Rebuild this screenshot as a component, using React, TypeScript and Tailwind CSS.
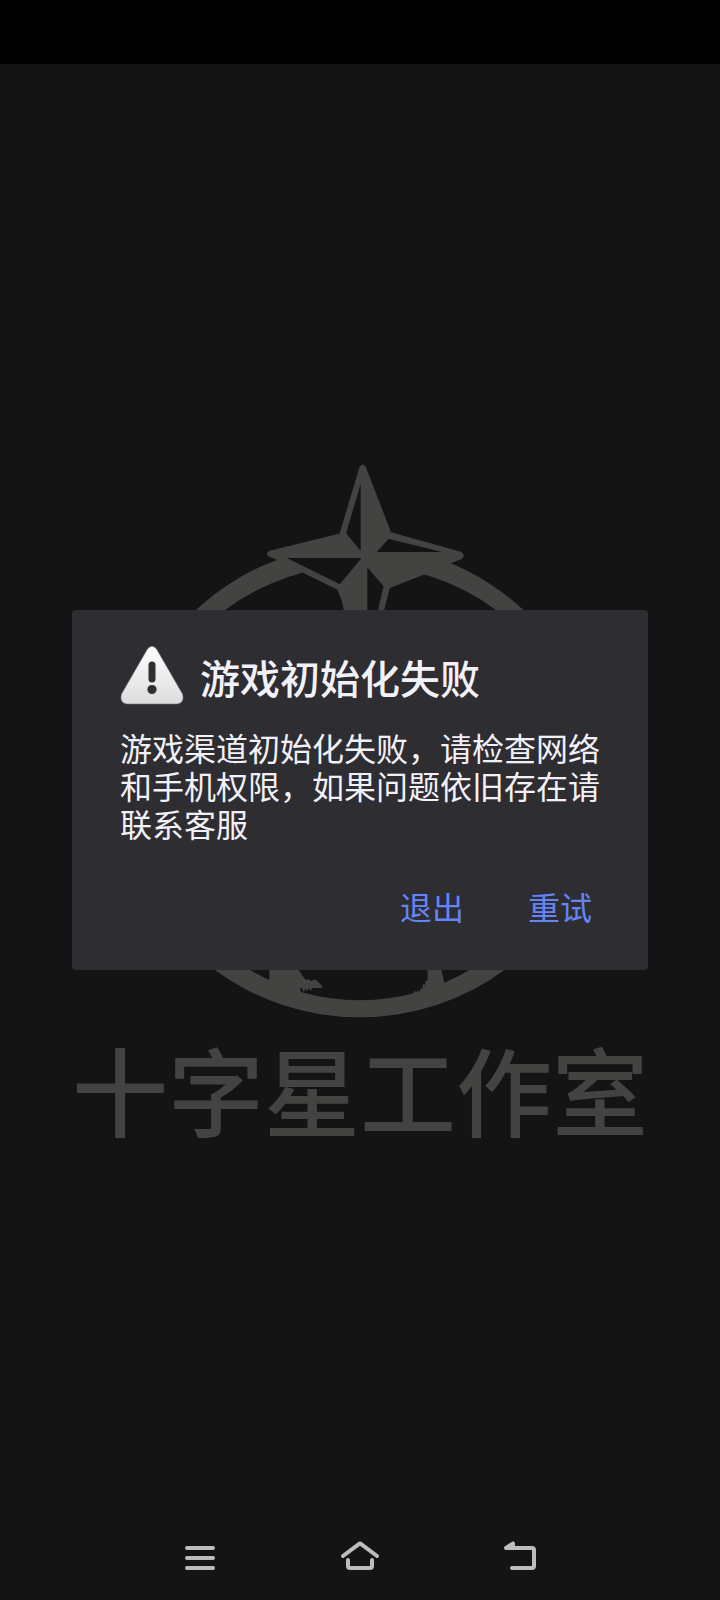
function StudioEmblem() {
  return (
    <svg viewBox="-324 30 1728 1728" className="w-full" fill="#434341" aria-hidden="true">
      {/* ring */}
      <path d="M36 492L48 480A717 717 0 0 1 1030 480L1042 492H960L948 480A681 681 0 0 0 135 480L120 492Z" />
      <path d="M88 1547L100 1557A738 738 0 0 0 978 1557L990 1547H888L873 1557A642 642 0 0 1 205 1557L192 1547Z" />

      {/* legs standing on the ring */}
      <path d="M268 1547H346L353 1557L377 1590L386 1588L392 1593L405 1588L415 1596L428 1610L424 1614L398 1614L392 1622L386 1615L380 1624L376 1616L371 1627L366 1614L360 1613L363 1629L378 1638L268 1600Z" />
      <path d="M743 1547H781L793 1597L780 1640H696L704 1621L708 1630L713 1619L717 1628L722 1614L727 1618L728 1603L735 1604L736 1594L743 1591Z" />

      {/* star */}
      <path
        stroke="#434341"
        strokeWidth="3"
        d="M540 51Q548 39 556 51L632 248L843 307Q856 316 844 326L805 341L725 375L628 413L608 492H496L486 450L473 418L372 368L296 331L264 317Q258 308 268 304L480 252Z"
      />
      <path
        fill="#141414"
        stroke="#434341"
        strokeWidth="4"
        d="M544 88L496 250L544 308ZM625 264L802 308H586ZM312 322H549L480 405ZM560 347L613 408L592 496H560Z"
      />
    </svg>
  );
}

function WarningIcon() {
  return (
    <svg viewBox="0 0 64 64" className="size-16 shrink-0" aria-hidden="true">
      <defs>
        <linearGradient id="warn" x1="0" y1="0" x2="0" y2="1">
          <stop offset="0" stopColor="#ffffff" />
          <stop offset="1" stopColor="#dcdcdc" />
        </linearGradient>
      </defs>
      <path
        d="M27.500 3Q32 -2.500 36.500 3L62.500 48Q65 57 57 58H7Q-1 57 1.500 48Z"
        fill="url(#warn)"
        stroke="#77777a"
        strokeWidth="0.600"
      />
      <rect x="28.500" y="15.500" width="7" height="21" rx="3.500" fill="#2f2f32" />
      <circle cx="32" cy="43.500" r="4.600" fill="#2f2f32" />
    </svg>
  );
}

const navItems = [
  { label: "最近任务", d: "M7 10H33M7 20H33M7 30H33" },
  { label: "主屏幕", d: "M3 18L18.500 6.300Q20 5 21.500 6.300L37 18M8 22V28Q8 30 10 30H30Q32 30 32 28V22" },
  { label: "返回", d: "M13 5.500L6 10H32Q34 10 34 12V28Q34 30 32 30H12M13 5.500V9" },
];

export default function App() {
  return (
    <div className="relative flex min-h-screen flex-col bg-[#141414] font-['Noto_Sans_CJK_SC',sans-serif]">
      {/* Splash */}
      <div className="absolute inset-0 flex flex-col items-center justify-center">
        <div className="w-4/5">
          <StudioEmblem />
          <p className="text-center text-8xl leading-[104px] font-medium whitespace-nowrap text-[#434341]">十字星工作室</p>
        </div>
      </div>

      <div className="h-16 bg-black" />

      <main className="relative flex flex-1 items-center justify-center">
        <div
          role="alertdialog"
          aria-labelledby="title"
          aria-describedby="message"
          className="w-4/5 rounded bg-[#2e2d32] pt-9 pb-4 text-[#f2f1f7]"
        >
          <div className="flex items-start gap-4 px-12">
            <WarningIcon />
            <h1 id="title" className="text-[40px] leading-[62px] font-medium">游戏初始化失败</h1>
          </div>
          <p id="message" className="mt-[18px] px-12 text-[32px] leading-[38px]">
            游戏渠道初始化失败，请检查网络和手机权限，如果问题依旧存在请联系客服
          </p>
          <div className="mt-4 flex justify-end px-6 text-[32px] text-[#6585f6]">
            <button className="h-24 w-32">退出</button>
            <button className="h-24 w-32">重试</button>
          </div>
        </div>
      </main>

      <nav className="relative flex h-[84px] items-center justify-center">
        {navItems.map((item) => (
          <button key={item.label} aria-label={item.label} className="flex h-full w-40 items-center justify-center">
            <svg
              viewBox="0 0 40 40"
              className="size-10"
              fill="none"
              stroke="#bdbdbd"
              strokeWidth="4"
              strokeLinecap="round"
              strokeLinejoin="round"
            >
              <path d={item.d} />
            </svg>
          </button>
        ))}
      </nav>
    </div>
  );
}
